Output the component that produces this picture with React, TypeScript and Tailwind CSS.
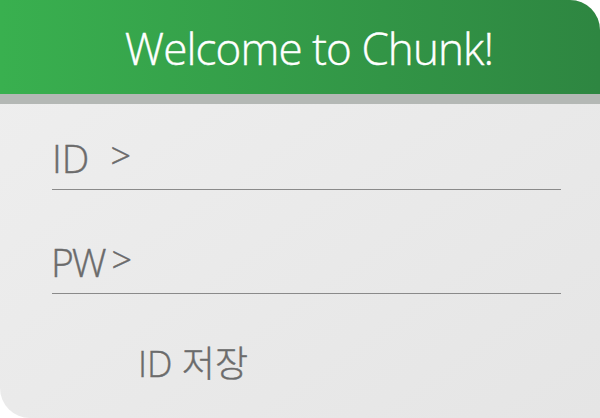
import React from "react";

export default function App() {
  return (
    <div className="w-[600px] h-[418px] bg-white" style={{ fontFamily: '"Open Sans", "Noto Sans CJK KR", sans-serif' }}>
      <div className="w-full h-full flex flex-col overflow-hidden rounded-tr-[30px] rounded-bl-[30px] bg-gradient-to-br from-[#efefef] to-[#e5e5e5]">
        <div className="h-[94px] shrink-0 flex items-center justify-center pl-[18px] bg-gradient-to-r from-[#39b04f] to-[#2e8641]">
          <h1 className="text-white text-[44px] font-light [-webkit-text-stroke:0.4px] leading-none tracking-[-0.9px] pt-[1px]">Welcome to Chunk!</h1>
        </div>
        <div className="h-[10px] shrink-0 bg-[#b4b8b5]" />

        <div className="flex flex-col pl-[52px] text-[#6b6b6b] font-light [-webkit-text-stroke:0.4px]">
          <div className="w-[509px] h-[86px] flex items-end pb-[12px] border-b border-[#8a8a8a]">
            <span className="text-[39px] leading-none">ID</span>
            <span className="text-[36px] leading-none ml-[21px] mb-[3px]">&gt;</span>
          </div>
          <div className="w-[509px] h-[104px] flex items-end pb-[12px] border-b border-[#8a8a8a]">
            <span className="text-[39px] leading-none tracking-[-2px] -ml-[1px]">PW</span>
            <span className="text-[36px] leading-none ml-[7px] mb-[3px]">&gt;</span>
          </div>
          <div className="pl-[86px] pt-[52px]">
            <span className="text-[36px] leading-none">ID 저장</span>
          </div>
        </div>
      </div>
    </div>
  );
}
